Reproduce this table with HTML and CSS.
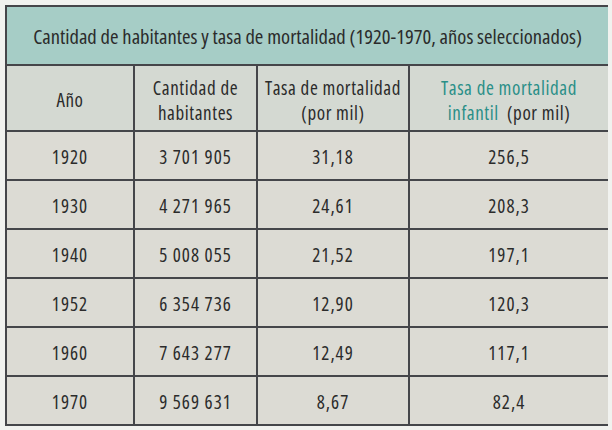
FILE: index.html
```html
<!DOCTYPE html>
<html lang="es">
<head>
<meta charset="utf-8">
<link rel="stylesheet" href="styles.css">
</head>
<body>
<table class="data">
  <colgroup>
    <col class="c1"><col class="c2"><col class="c3"><col class="c4">
  </colgroup>
  <thead>
    <tr><th class="title" colspan="4">Cantidad de habitantes y tasa de mortalidad (1920-1970, años seleccionados)</th></tr>
    <tr class="head">
      <th>Año</th>
      <th>Cantidad de<br>habitantes</th>
      <th>Tasa de mortalidad<br>(por mil)</th>
      <th><span class="teal">Tasa de mortalidad<br>infantil</span>&nbsp; (por mil)</th>
    </tr>
  </thead>
  <tbody>
    <tr><td>1920</td><td>3 701 905</td><td>31,18</td><td>256,5</td></tr>
    <tr><td>1930</td><td>4 271 965</td><td>24,61</td><td>208,3</td></tr>
    <tr><td>1940</td><td>5 008 055</td><td>21,52</td><td>197,1</td></tr>
    <tr><td>1952</td><td>6 354 736</td><td>12,90</td><td>120,3</td></tr>
    <tr><td>1960</td><td>7 643 277</td><td>12,49</td><td>117,1</td></tr>
    <tr><td>1970</td><td>9 569 631</td><td>8,67</td><td>82,4</td></tr>
  </tbody>
</table>
</body>
</html>
```
FILE: styles.css
```css
html, body {
  margin: 0;
  padding: 0;
  background: #f1f2ef;
}
body {
  padding: 5px 5px 0 5px;
  font-family: "Open Sans", "DejaVu Sans", sans-serif;
  font-stretch: 75%;
  color: #2b2b2b;
}
.data {
  width: 602px;
  border-collapse: collapse;
  table-layout: fixed;
  background: #dcdbd4;
}
.c1 { width: 128px; }
.c2 { width: 123px; }
.c3 { width: 152px; }
.c4 { width: 199px; }
.data th, .data td {
  border: 2px solid #45464a;
  text-align: center;
  font-weight: normal;
  padding: 0;
}
.title {
  height: 56px;
  background: #a6cdc6;
  font-size: 20.6px;
  white-space: nowrap;
  padding-top: 1px !important;
}
.head th {
  height: 59px;
  padding-top: 5px;
  background: #d4d9d2;
  font-size: 19px;
  letter-spacing: 0.6px;
  line-height: 25px;
}
.teal { color: #2a8f88; }
.data td {
  height: 44px;
  padding-top: 3px;
  font-size: 19px;
  letter-spacing: 1px;
}
.data td:last-child, .data th:last-child { border-right: none; }
```
